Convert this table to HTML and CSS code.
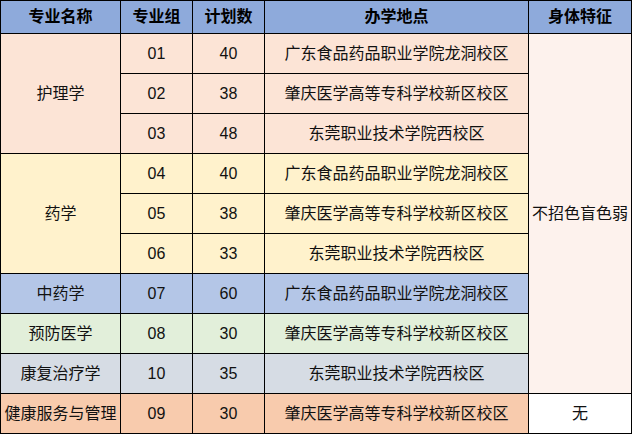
FILE: index.html
```html
<!DOCTYPE html>
<html lang="zh">
<head>
<meta charset="utf-8">
<link rel="stylesheet" href="styles.css">
</head>
<body>
<table class="plan">
  <colgroup>
    <col class="c1"><col class="c2"><col class="c3"><col class="c4"><col class="c5">
  </colgroup>
  <thead>
    <tr class="head">
      <th>专业名称</th><th>专业组</th><th>计划数</th><th>办学地点</th><th>身体特征</th>
    </tr>
  </thead>
  <tbody>
    <tr class="peach">
      <td rowspan="3">护理学</td><td>01</td><td>40</td><td>广东食品药品职业学院龙洞校区</td>
      <td rowspan="9" class="cond">不招色盲色弱</td>
    </tr>
    <tr class="peach"><td>02</td><td>38</td><td>肇庆医学高等专科学校新区校区</td></tr>
    <tr class="peach"><td>03</td><td>48</td><td>东莞职业技术学院西校区</td></tr>
    <tr class="yellow"><td rowspan="3">药学</td><td>04</td><td>40</td><td>广东食品药品职业学院龙洞校区</td></tr>
    <tr class="yellow"><td>05</td><td>38</td><td>肇庆医学高等专科学校新区校区</td></tr>
    <tr class="yellow"><td>06</td><td>33</td><td>东莞职业技术学院西校区</td></tr>
    <tr class="blue"><td>中药学</td><td>07</td><td>60</td><td>广东食品药品职业学院龙洞校区</td></tr>
    <tr class="green"><td>预防医学</td><td>08</td><td>30</td><td>肇庆医学高等专科学校新区校区</td></tr>
    <tr class="gray"><td>康复治疗学</td><td>10</td><td>35</td><td>东莞职业技术学院西校区</td></tr>
    <tr class="orange"><td>健康服务与管理</td><td>09</td><td>30</td><td>肇庆医学高等专科学校新区校区</td><td class="none">无</td></tr>
  </tbody>
</table>
</body>
</html>
```
FILE: styles.css
```css
html, body {
  margin: 0;
  padding: 0;
  background: #ffffff;
}
.plan {
  border-collapse: separate;
  border-spacing: 0;
  table-layout: fixed;
  width: 632px;
  border-left: 1px solid #000;
  border-top: 1px solid #000;
  box-sizing: border-box;
  font-family: "Liberation Sans", "Noto Sans CJK SC", sans-serif;
  font-size: 16px;
  color: #111;
}
.c1 { width: 120px; }
.c2 { width: 72px; }
.c3 { width: 72px; }
.c4 { width: 264px; }
.c5 { width: 103px; }
.plan th, .plan td {
  box-sizing: border-box;
  border-right: 1px solid #000;
  border-bottom: 1px solid #000;
  text-align: center;
  vertical-align: middle;
  padding: 0;
  white-space: nowrap;
  line-height: 20px;
}
.head th {
  height: 33px;
  background: #8eaadb;
  font-weight: 700;
  color: #000;
}
.plan tbody td { height: 40px; }
.peach td { background: #fce4d6; }
.yellow td { background: #fff2cc; }
.blue td { background: #b4c6e7; }
.green td { background: #e2efda; }
.gray td { background: #d6dce4; }
.orange td { background: #f8cbad; }
.plan td.cond { background: #fdf2ed; }
.plan td.none { background: #ffffff; }
```
